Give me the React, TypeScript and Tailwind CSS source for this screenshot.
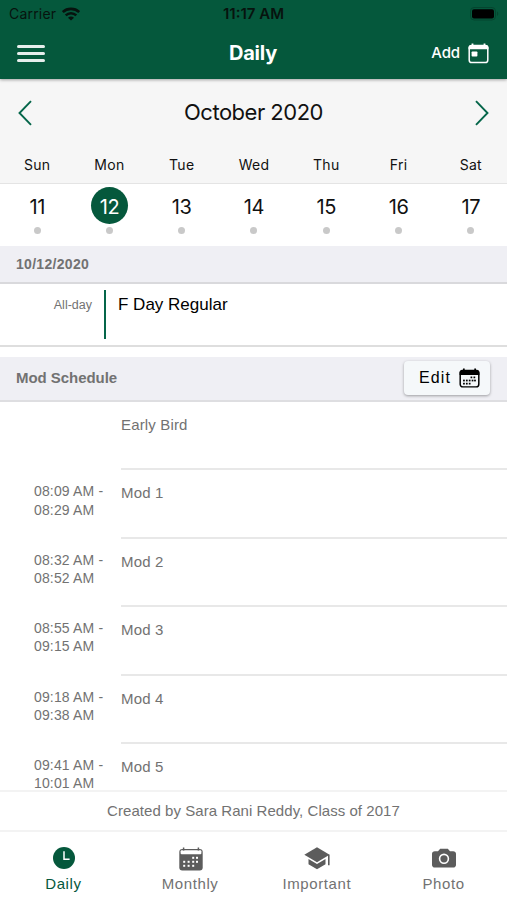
import type { ReactNode } from 'react'

interface Mod {
  name: string
  start?: string
  end?: string
}

interface Day {
  name: string
  date: number
}

const SELECTED_DATE = 12

const DAYS: Day[] = [
  { name: 'Sun', date: 11 },
  { name: 'Mon', date: 12 },
  { name: 'Tue', date: 13 },
  { name: 'Wed', date: 14 },
  { name: 'Thu', date: 15 },
  { name: 'Fri', date: 16 },
  { name: 'Sat', date: 17 },
]

const MODS: Mod[] = [
  { name: 'Early Bird' },
  { name: 'Mod 1', start: '08:09 AM', end: '08:29 AM' },
  { name: 'Mod 2', start: '08:32 AM', end: '08:52 AM' },
  { name: 'Mod 3', start: '08:55 AM', end: '09:15 AM' },
  { name: 'Mod 4', start: '09:18 AM', end: '09:38 AM' },
  { name: 'Mod 5', start: '09:41 AM', end: '10:01 AM' },
]

function WifiIcon() {
  return (
    <svg width="18" height="14" viewBox="0 0 18 14" fill="none" stroke="#07130e">
      <path d="M.8 5C5.2.8 12.8.8 17.2 5" strokeWidth="2.6" />
      <path d="M3.7 8.3c3-2.9 7.6-2.9 10.6 0" strokeWidth="2.5" />
      <path d="M9 13.6 6 10.8c1.7-1.6 4.3-1.6 6 0z" fill="#07130e" stroke="none" />
    </svg>
  )
}

function BatteryIcon() {
  return (
    <svg width="30" height="14" viewBox="0 0 30 14">
      <rect x=".5" y=".5" width="25" height="12.5" rx="3.6" fill="none" stroke="#05452f" />
      <rect x="2" y="2.2" width="22" height="9.2" rx="2" fill="#000" />
      <path d="M27 4.6c1.6.6 1.6 3.8 0 4.4z" fill="#05452f" />
    </svg>
  )
}

function AddCalendarIcon() {
  return (
    <svg width="21" height="21" viewBox="0 0 21 21" fill="none">
      <rect x="1.2" y="2.6" width="18.6" height="17" rx="2.6" stroke="#fff" strokeWidth="1.5" />
      <path d="M.5 6.2V4.4C.5 3 1.8 2 3.2 2h14.6c1.4 0 2.7 1 2.7 2.4v1.8z" fill="#fff" />
      <path d="M4.5 .4v3M16.5 .4v3" stroke="#fff" strokeWidth="1.8" />
      <rect x="3.6" y="8.4" width="5.8" height="5.2" rx=".8" fill="#fff" />
    </svg>
  )
}

// Dots inside the edit calendar, as [x, y] centres.
const CALENDAR_DOTS = [
  [14.2, 10.4], [17.6, 10.4],
  [5.6, 14], [8.9, 14], [12.2, 14], [15.5, 14], [18.3, 14],
  [5.6, 17.6], [8.9, 17.6], [12.2, 17.6],
]

function EditCalendarIcon() {
  return (
    <svg width="21" height="20" viewBox="0 0 24 23" fill="none">
      <rect x="1.3" y="3.3" width="21.4" height="18.4" rx="3" stroke="#000" strokeWidth="1.7" />
      <path d="M.6 8V5c0-2 1.2-3 3-3h16.8c1.8 0 3 1 3 3v3z" fill="#000" />
      <path d="M5.5 .5v3M18.5 .5v3" stroke="#000" strokeWidth="2" />
      {CALENDAR_DOTS.map(([x, y]) => (
        <rect key={`${x}-${y}`} x={x - 1} y={y - 0.6} width="2" height="2" fill="#000" />
      ))}
    </svg>
  )
}

function MonthlyIcon() {
  return (
    <svg width="24" height="24" viewBox="0 0 24 24" fill="none" className="mt-px">
      <rect x=".3" y="2" width="23.4" height="21.6" rx="3" fill="#5c5c5c" />
      <rect x="1.6" y="3.3" width="20.8" height="4" rx="1" fill="#fff" />
      <path d="M4.6 .4v3.2M19.4 .4v3.2" stroke="#5c5c5c" strokeWidth="1.5" />
      {[
        [14.2, 9.8], [18, 9.8],
        [5.2, 13.8], [9.6, 13.8], [14.2, 13.8], [18, 13.8],
        [5.2, 17.8], [9.6, 17.8], [14.2, 17.8],
      ].map(([x, y]) => (
        <rect key={`${x}-${y}`} x={x - 1} y={y} width="2" height="2" fill="#fff" />
      ))}
    </svg>
  )
}

function ClockIcon() {
  return (
    <svg width="22" height="22" viewBox="0 0 22 22" fill="none">
      <circle cx="11" cy="11" r="11" fill="#05583c" />
      <path d="M11 4.2v8h5.6" stroke="#fff" strokeWidth="1.5" />
    </svg>
  )
}

function SchoolIcon() {
  return (
    <svg width="26" height="23" viewBox="0 0 26 23" fill="#5c5c5c">
      <path d="M13 .3 25.6 7.7 13 15.2.3 7.7z" />
      <path d="M4.5 11.9v5.3L13 22.3l8.5-5.1v-5.3L13 16.9z" />
      <path d="M24 7.7h1.6v10.5H24z" />
    </svg>
  )
}

function CameraIcon() {
  return (
    <svg width="24" height="20" viewBox="0 0 24 20" fill="#5c5c5c">
      <path d="M8.2 .7h7.6L18 3.2h3.2C22.8 3.2 24 4.3 24 5.8v11.1c0 1.5-1.2 2.6-2.8 2.6H2.8C1.2 19.5 0 18.4 0 16.9V5.8c0-1.5 1.2-2.6 2.8-2.6H6z" />
      <circle cx="12" cy="10.8" r="4.4" fill="none" stroke="#fff" strokeWidth="1.6" />
    </svg>
  )
}

function Chevron({ direction }: { direction: 'left' | 'right' }) {
  return (
    <svg width="14" height="26" viewBox="0 0 14 26" fill="none" stroke="#05664a" strokeWidth="1.9">
      <path d={direction === 'left' ? 'M13 1.2 1.5 13 13 24.8' : 'M1 1.2 12.5 13 1 24.8'} />
    </svg>
  )
}

function Header() {
  return (
    <header className="relative z-10 h-[79px] shrink-0 bg-[#05583c] font-['Inter',sans-serif] shadow-[0_1px_3px_rgba(0,0,0,0.35)]">
      <div className="grid h-[27px] grid-cols-3 items-center pl-[7px] pr-[7px] text-[14px] text-[#07130e]">
        <div className="flex items-center gap-[6px] pl-[2px]">
          <span className="tracking-[0.2px]">Carrier</span>
          <WifiIcon />
        </div>
        <span className="pt-px text-center text-[15px] font-semibold">11:17 AM</span>
        <div className="flex justify-end">
          <BatteryIcon />
        </div>
      </div>
      <div className="grid h-[52px] grid-cols-3 items-center pl-[17px] pr-[18px] text-white">
        <div className="flex w-[28px] flex-col gap-1">
          <span className="h-[3px] rounded-full bg-white/90" />
          <span className="h-[3px] rounded-full bg-white/90" />
          <span className="h-[3px] rounded-full bg-white/90" />
        </div>
        <h1 className="text-center text-[20px] font-bold tracking-[-0.2px]">Daily</h1>
        <div className="flex items-center justify-end gap-2">
          <span className="text-[15px] font-medium tracking-[-0.1px]">Add</span>
          <AddCalendarIcon />
        </div>
      </div>
    </header>
  )
}

function WeekStrip() {
  return (
    <section className="shrink-0 font-['Inter',sans-serif] text-[#111]">
      <div className="h-[105px] border-b border-[#e4e4e4] bg-[#f6f6f6]">
        <div className="flex h-[67px] items-center justify-between px-[18px]">
          <Chevron direction="left" />
          <h2 className="text-[22px] tracking-[-0.5px]">October 2020</h2>
          <Chevron direction="right" />
        </div>
        <div className="grid grid-cols-7 pl-px text-center text-[14px] leading-[38px] tracking-[0.3px]">
          {DAYS.map((day) => (
            <span key={day.name}>{day.name}</span>
          ))}
        </div>
      </div>
      <div className="grid h-[62px] grid-cols-7 bg-white pl-px pt-[3px]">
        {DAYS.map((day) => (
          <div key={day.date} className="flex flex-col items-center gap-[3px]">
            <span
              className={
                'flex h-[37px] w-[37px] items-center justify-center rounded-full pt-[2px] text-[20px] tracking-[-0.4px] ' +
                (day.date === SELECTED_DATE ? 'bg-[#05583c] text-white' : '')
              }
            >
              {day.date}
            </span>
            <span className="h-[7px] w-[7px] rounded-full bg-[#c9c9c9]" />
          </div>
        ))}
      </div>
    </section>
  )
}

function ModRow({ mod }: { mod: Mod }) {
  return (
    <li className="flex h-[68.4px] shrink-0">
      <div className="w-[121px] shrink-0 pl-[34px] pt-[12px] text-[14px] leading-[18.3px] tracking-[0.15px]">
        {mod.start && (
          <>
            {mod.start} -<br />
            {mod.end}
          </>
        )}
      </div>
      <div className="flex-1 border-b-2 border-[#e8e8e8] pt-[13px] text-[15px] leading-5 tracking-[0.15px]">
        {mod.name}
      </div>
    </li>
  )
}

function Tab({ label, icon, active }: { label: string; icon: ReactNode; active?: boolean }) {
  return (
    <button
      type="button"
      className={
        'flex flex-1 flex-col items-center pt-[13px] text-[15px] leading-5 tracking-[0.6px] ' +
        (active ? 'text-[#05583c]' : 'text-[#727272]')
      }
    >
      <span className="flex h-[26px] items-center justify-center pl-px">{icon}</span>
      <span className="mt-[3px]">{label}</span>
    </button>
  )
}

function App() {
  return (
    <div className="flex h-[900px] w-full flex-col overflow-hidden bg-white font-['Liberation_Sans',sans-serif] text-[#727272]">
      <Header />
      <WeekStrip />

      {/* Events for the selected day */}
      <div className="flex h-[38px] shrink-0 items-center border-b-2 border-[#d9d9dc] bg-[#efeff4] pl-4 pt-px text-[14px] font-bold tracking-[0.3px]">
        10/12/2020
      </div>
      <div className="flex h-[63px] shrink-0 border-b-2 border-[#dedede] pt-[6px]">
        <span className="w-[92px] pt-[6px] text-right text-[12.5px] leading-[18px]">All-day</span>
        <span className="ml-[12px] h-[49px] w-[2px] bg-[#05664a]" />
        <span className="ml-[12px] pt-[5px] text-[17px] leading-5 text-black">F Day Regular</span>
      </div>

      {/* Mod schedule */}
      <div className="mt-[10px] flex h-[45px] shrink-0 items-center justify-between border-b-2 border-[#dedee1] bg-[#efeff4] pl-4 pr-[17px]">
        <h3 className="text-[15px] font-bold tracking-[-0.05px]">Mod Schedule</h3>
        <button
          type="button"
          className="mb-px flex h-[34px] w-[86px] items-center justify-end gap-[8px] rounded bg-[#f5f8fa] pr-[10px] text-[16px] tracking-[1.1px] text-black shadow-[0_1px_3px_rgba(0,0,0,0.35)]"
        >
          Edit
          <EditCalendarIcon />
        </button>
      </div>
      <ul className="flex min-h-0 flex-1 flex-col overflow-hidden">
        {MODS.map((mod) => (
          <ModRow key={mod.name} mod={mod} />
        ))}
      </ul>

      <footer className="flex h-[40px] shrink-0 items-center justify-center border-t-2 border-[#f3f3f3] text-[15px] tracking-[0.05px]">
        Created by Sara Rani Reddy, Class of 2017
      </footer>
      <nav className="flex h-[70px] shrink-0 border-t-2 border-[#f3f3f3]">
        <Tab label="Daily" icon={<ClockIcon />} active />
        <Tab label="Monthly" icon={<MonthlyIcon />} />
        <Tab label="Important" icon={<SchoolIcon />} />
        <Tab label="Photo" icon={<CameraIcon />} />
      </nav>
    </div>
  )
}

export default App
